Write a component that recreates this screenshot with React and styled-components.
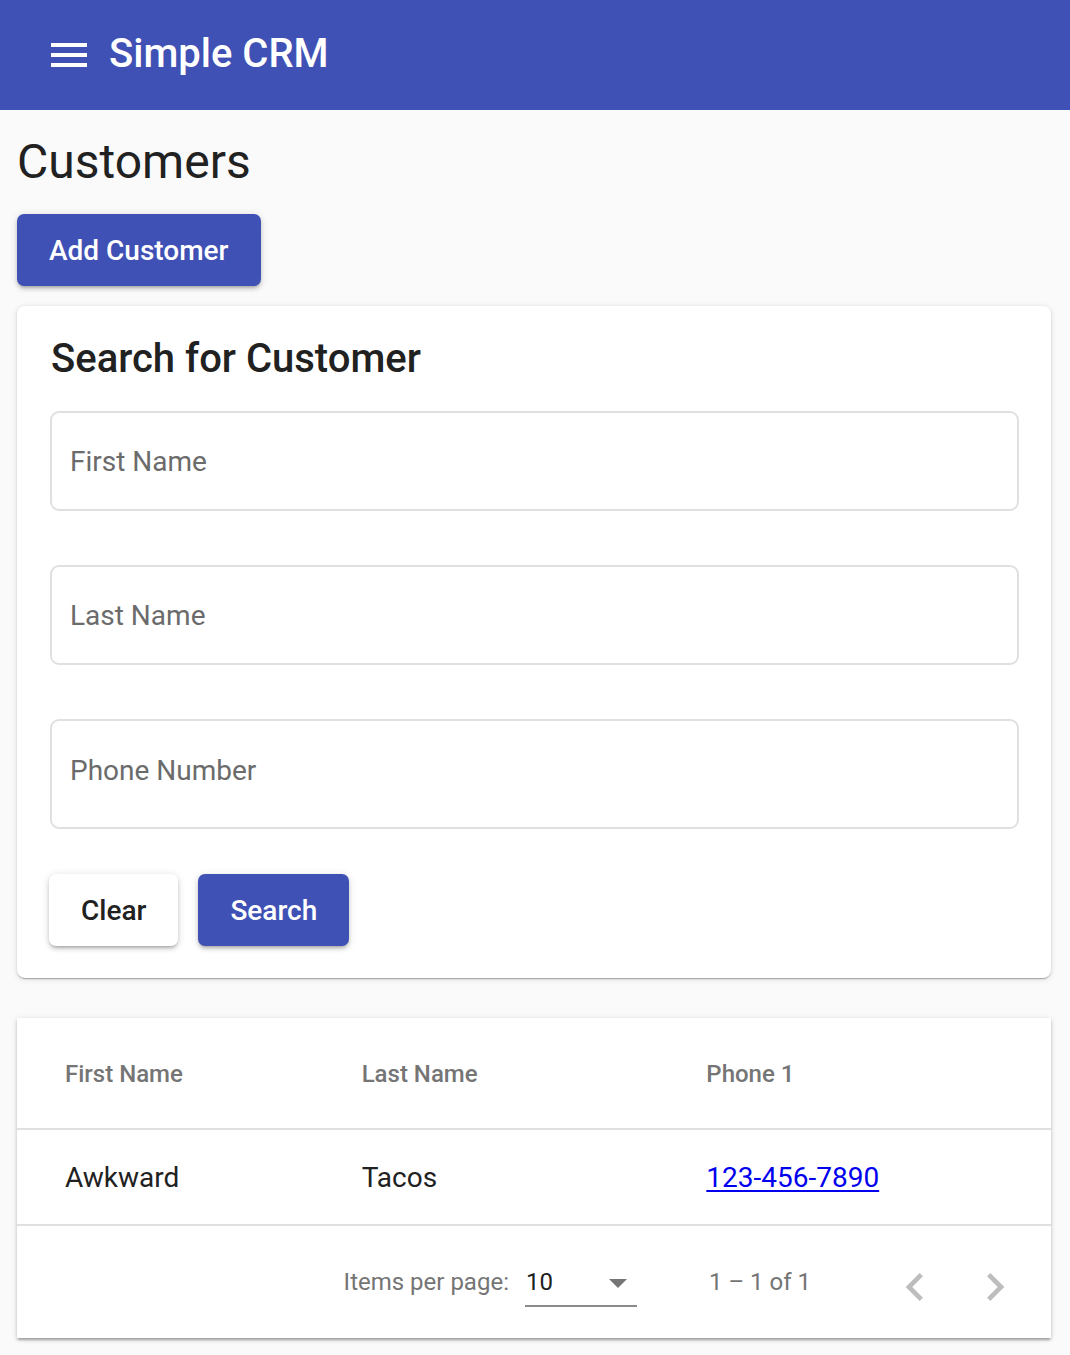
import React from "react";
import styled, { createGlobalStyle } from "styled-components";

const GlobalStyle = createGlobalStyle`
  html, body {
    margin: 0;
    padding: 0;
    background: #fafafa;
    font-family: Roboto, "Helvetica Neue", Arial, sans-serif;
    color: #212121;
  }
  * { box-sizing: border-box; }
`;

const Toolbar = styled.header`
  height: 110px;
  background: #3f51b5;
  display: flex;
  align-items: center;
  padding-left: 45px;
  gap: 16px;
  color: #fff;
`;

const MenuIcon = styled.svg`
  width: 48px;
  height: 48px;
  fill: #fff;
  flex: none;
`;

const AppTitle = styled.span`
  font-size: 40px;
  font-weight: 500;
  line-height: 48px;
  margin-bottom: 2px;
`;

const Main = styled.main`
  padding: 0 19px 40px 17px;
  display: flex;
  flex-direction: column;
  align-items: flex-start;
`;

const PageTitle = styled.h1`
  margin: 24px 0 0 0;
  font-size: 48px;
  font-weight: 400;
  line-height: 56px;
  color: #212121;
`;

const Button = styled.button`
  height: 72px;
  padding: 0 32px;
  border: none;
  border-radius: 7px;
  font-family: Roboto, Arial, sans-serif;
  font-size: 28px;
  font-weight: 500;
  cursor: pointer;
  background: ${(p) => (p.$primary ? "#3f51b5" : "#ffffff")};
  color: ${(p) => (p.$primary ? "#ffffff" : "#212121")};
  box-shadow: 0 3px 3px -2px rgba(0, 0, 0, 0.2),
    0 3px 4px 0 rgba(0, 0, 0, 0.14), 0 1px 8px 0 rgba(0, 0, 0, 0.12);
`;

const AddButton = styled(Button)`
  margin-top: 24px;
`;

const Card = styled.section`
  width: 1034px;
  margin-top: 20px;
  background: #fff;
  border-radius: 8px;
  padding: 29px 32px 32px 32px;
  box-shadow: 0 2px 1px -1px rgba(0, 0, 0, 0.2),
    0 1px 2px 0 rgba(0, 0, 0, 0.14), 0 1px 6px 0 rgba(0, 0, 0, 0.12);
  display: flex;
  flex-direction: column;
`;

const CardTitle = styled.h2`
  margin: 0 0 0 2px;
  font-size: 40px;
  font-weight: 500;
  line-height: 48px;
  color: #212121;
`;

const Fields = styled.div`
  margin-top: 28px;
  display: flex;
  flex-direction: column;
  gap: 54px;
`;

const TextField = styled.input`
  width: 969px;
  height: ${(p) => p.$h || 100}px;
  margin-left: 1px;
  border: 2px solid #e0e0e0;
  border-radius: 9px;
  padding: 0 18px ${(p) => (p.$h ? 8 : 0)}px 18px;
  font-family: Roboto, Arial, sans-serif;
  font-size: 28px;
  color: #212121;
  background: #fff;
  outline: none;
  &::placeholder {
    color: #6b6b6b;
    opacity: 1;
  }
`;

const Actions = styled.div`
  margin-top: 45px;
  display: flex;
  gap: 20px;
`;

const TableCard = styled.section`
  width: 1034px;
  margin-top: 40px;
  background: #fff;
  box-shadow: 0 3px 2px -1px rgba(0, 0, 0, 0.2),
    0 2px 3px 0 rgba(0, 0, 0, 0.14), 0 1px 6px 0 rgba(0, 0, 0, 0.12);
`;

const Row = styled.div`
  display: grid;
  grid-template-columns: 1fr 1fr 1fr;
  align-items: center;
  height: ${(p) => p.$h}px;
  border-bottom: 2px solid #e0e0e0;
  & > *:first-child {
    padding-left: 48px;
  }
  & > *:last-child {
    padding-right: 48px;
  }
`;

const HeadCell = styled.div`
  font-size: 24px;
  font-weight: 500;
  color: #757575;
  padding-top: 2px;
`;

const Cell = styled.div`
  font-size: 28px;
  font-weight: 400;
  color: #212121;
`;

const PhoneLink = styled.a`
  color: #0000ee;
  text-decoration: underline;
  text-underline-offset: 3px;
  text-decoration-thickness: 2px;
`;

const Paginator = styled.div`
  height: 112px;
  display: flex;
  align-items: center;
  justify-content: flex-end;
  padding-right: 16px;
  font-size: 24px;
  color: #757575;
`;

const PageLabel = styled.span`
  margin-right: 16px;
`;

const Select = styled.div`
  width: 112px;
  height: 48px;
  margin-top: 2px;
  display: flex;
  align-items: center;
  justify-content: space-between;
  border-bottom: 2px solid #8a8a8a;
  padding: 0 10px 0 1px;
  color: #212121;
  font-size: 24px;
`;

const Arrow = styled.span`
  width: 0;
  height: 0;
  border-left: 9px solid transparent;
  border-right: 9px solid transparent;
  border-top: 9px solid #757575;
  margin-top: 2px;
`;

const RangeLabel = styled.span`
  margin: 0 64px 0 72px;
`;

const NavButton = styled.button`
  width: 80px;
  height: 80px;
  border: none;
  background: transparent;
  padding: 0;
  margin-top: 10px;
  display: flex;
  align-items: center;
  justify-content: center;
  cursor: default;
`;

const NavIcon = styled.svg`
  width: 56px;
  height: 56px;
  fill: #bdbdbd;
`;

export default function App() {
  return (
    <>
      <GlobalStyle />
      <Toolbar>
        <MenuIcon viewBox="0 0 24 24">
          <path d="M3 18h18v-2H3v2zm0-5h18v-2H3v2zm0-7v2h18V6H3z" />
        </MenuIcon>
        <AppTitle>Simple CRM</AppTitle>
      </Toolbar>
      <Main>
        <PageTitle>Customers</PageTitle>
        <AddButton $primary>Add Customer</AddButton>
        <Card>
          <CardTitle>Search for Customer</CardTitle>
          <Fields>
            <TextField placeholder="First Name" />
            <TextField placeholder="Last Name" />
            <TextField placeholder="Phone Number" $h={110} />
          </Fields>
          <Actions>
            <Button>Clear</Button>
            <Button $primary>Search</Button>
          </Actions>
        </Card>
        <TableCard>
          <Row $h={112}>
            <HeadCell>First Name</HeadCell>
            <HeadCell>Last Name</HeadCell>
            <HeadCell>Phone 1</HeadCell>
          </Row>
          <Row $h={96}>
            <Cell>Awkward</Cell>
            <Cell>Tacos</Cell>
            <Cell>
              <PhoneLink href="#">123-456-7890</PhoneLink>
            </Cell>
          </Row>
          <Paginator>
            <PageLabel>Items per page:</PageLabel>
            <Select>
              <span>10</span>
              <Arrow />
            </Select>
            <RangeLabel>1 – 1 of 1</RangeLabel>
            <NavButton aria-label="Previous page">
              <NavIcon viewBox="0 0 24 24">
                <path d="M15.41 7.41L14 6l-6 6 6 6 1.41-1.41L10.83 12z" />
              </NavIcon>
            </NavButton>
            <NavButton aria-label="Next page">
              <NavIcon viewBox="0 0 24 24">
                <path d="M10 6L8.59 7.41 13.17 12l-4.58 4.59L10 18l6-6z" />
              </NavIcon>
            </NavButton>
          </Paginator>
        </TableCard>
      </Main>
    </>
  );
}
